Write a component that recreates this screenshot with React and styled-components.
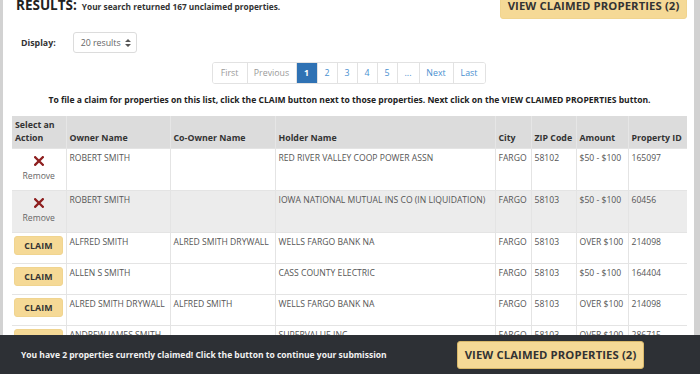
import React from 'react';
import styled, { createGlobalStyle } from 'styled-components';

const GlobalStyle = createGlobalStyle`
  html, body {
    margin: 0;
    padding: 0;
    background: #d2d2d2;
    font-family: "Open Sans", "Liberation Sans", sans-serif;
    overflow: hidden;
  }
`;

const Page = styled.div`
  margin: -9px 6px 0 3px;
  padding: 0 7px 60px 9px;
  background: #fff;
  min-height: 420px;
`;

const HeaderRow = styled.div`
  display: flex;
  align-items: center;
  justify-content: space-between;
`;

const Heading = styled.h2`
  margin: 0 0 0 4px;
  font-size: 13.5px;
  font-weight: 700;
  color: #222;
  display: flex;
  align-items: baseline;
  gap: 5px;
`;

const SubHeading = styled.span`
  font-size: 8.3px;
  font-weight: 700;
  color: #333;
`;

const GoldButton = styled.button`
  font-family: inherit;
  font-weight: 700;
  font-size: ${({ size }) => size || 11.3}px;
  color: #333;
  background: #f5d996;
  border: 1px solid ${({ bordered }) => (bordered ? '#d9b86a' : '#f0d48f')};
  border-radius: 3px;
  padding: 0;
  height: ${({ h }) => h || 28}px;
  width: ${({ w }) => w}px;
  cursor: pointer;
  letter-spacing: 0.1px;
`;

const DisplayRow = styled.div`
  display: flex;
  align-items: center;
  margin-top: 13px;
  padding-left: 9px;
  gap: 17px;
`;

const Label = styled.span`
  font-size: 8.8px;
  font-weight: 700;
  color: #333;
`;

const Select = styled.div`
  display: flex;
  align-items: center;
  gap: 4px;
  box-sizing: border-box;
  width: 64px;
  height: 21px;
  padding-left: 7px;
  border: 1px solid #dcdcdc;
  border-radius: 3px;
  font-size: 8.8px;
  color: #666;
`;

const PagerWrap = styled.div`
  display: flex;
  justify-content: center;
  margin-top: 9px;
  padding-right: 2px;
`;

const Pager = styled.div`
  display: flex;
  border: 1px solid #e2e2e2;
  border-radius: 3px;
  overflow: hidden;
`;

const PageItem = styled.span`
  box-sizing: border-box;
  height: 20px;
  width: ${({ w }) => w}px;
  display: flex;
  align-items: center;
  justify-content: center;
  font-size: 8.8px;
  border-left: ${({ first }) => (first ? 'none' : '1px solid #e2e2e2')};
  color: ${({ active, disabled }) => (active ? '#fff' : disabled ? '#9a9a9a' : '#4a8fd0')};
  background: ${({ active }) => (active ? '#2f72b4' : '#fff')};
  font-weight: ${({ active }) => (active ? 700 : 400)};
`;

const Instruction = styled.p`
  margin: 10px 0 0;
  text-align: center;
  font-size: 8.55px;
  font-weight: 700;
  color: #222;
  line-height: 13px;
`;

const Table = styled.table`
  margin-top: 9px;
  width: 675px;
  border-collapse: collapse;
  table-layout: fixed;
  font-size: 8.6px;
`;

const Th = styled.th`
  background: #dcdcdc;
  color: #333;
  font-weight: 700;
  text-align: left;
  vertical-align: bottom;
  padding: 3px 3px 3px;
  line-height: 13px;
  border-left: 1px solid #e6e6e6;
  font-size: 8.8px;
  &:first-child {
    border-left: none;
  }
`;

const Tr = styled.tr`
  background: ${({ shaded }) => (shaded ? '#ececec' : '#fff')};
  border-top: 1px solid #e4e4e4;
`;

const Td = styled.td`
  vertical-align: top;
  padding: 3px 3px 0;
  height: ${({ h }) => h}px;
  box-sizing: border-box;
  color: #555;
  line-height: 13px;
  border-left: 1px solid #e4e4e4;
  white-space: nowrap;
  overflow: hidden;
  &:first-child {
    border-left: none;
    padding-left: 2px;
    padding-right: 2px;
  }
`;

const RemoveCell = styled.div`
  display: flex;
  flex-direction: column;
  align-items: center;
  padding-top: 4px;
  gap: 4px;
  color: #666;
  font-size: 8.6px;
`;

const BottomBar = styled.div`
  position: fixed;
  left: 0;
  right: 0;
  bottom: 0;
  height: 39px;
  background: #2d3035;
  display: flex;
  align-items: center;
  justify-content: space-between;
  padding: 0 56px 0 21px;
`;

const BarText = styled.span`
  color: #f2f2f2;
  font-size: 8.5px;
  font-weight: 700;
`;

const SortIcon = () => (
  <svg width="6" height="8" viewBox="0 0 6 8">
    <path d="M3 0 L6 3 L0 3 Z M3 8 L6 5 L0 5 Z" fill="#555" />
  </svg>
);

const XIcon = () => (
  <svg width="10" height="10" viewBox="0 0 10 10">
    <path d="M1.2 1.2 L8.8 8.8 M8.8 1.2 L1.2 8.8" stroke="#8e1f1f" strokeWidth="2.3" strokeLinecap="square" />
  </svg>
);

const columns = [
  { label: 'Select an Action', w: 54 },
  { label: 'Owner Name', w: 104 },
  { label: 'Co-Owner Name', w: 105 },
  { label: 'Holder Name', w: 220 },
  { label: 'City', w: 36 },
  { label: 'ZIP Code', w: 45 },
  { label: 'Amount', w: 52 },
  { label: 'Property ID', w: 59 },
];

const rows = [
  { claimed: true, owner: 'ROBERT SMITH', co: '', holder: 'RED RIVER VALLEY COOP POWER ASSN', zip: '58102', amount: '$50 - $100', id: '165097' },
  { claimed: true, shaded: true, owner: 'ROBERT SMITH', co: '', holder: 'IOWA NATIONAL MUTUAL INS CO (IN LIQUIDATION)', zip: '58103', amount: '$50 - $100', id: '60456' },
  { owner: 'ALFRED SMITH', co: 'ALRED SMITH DRYWALL', holder: 'WELLS FARGO BANK NA', zip: '58103', amount: 'OVER $100', id: '214098' },
  { owner: 'ALLEN S SMITH', co: '', holder: 'CASS COUNTY ELECTRIC', zip: '58103', amount: '$50 - $100', id: '164404' },
  { owner: 'ALRED SMITH DRYWALL', co: 'ALFRED SMITH', holder: 'WELLS FARGO BANK NA', zip: '58103', amount: 'OVER $100', id: '214098' },
  { owner: 'ANDREW JAMES SMITH', co: '', holder: 'SUPERVALUE INC', zip: '58103', amount: 'OVER $100', id: '286715' },
  { owner: 'ANN SMITH', co: '', holder: 'WELLS FARGO BANK NA', zip: '58103', amount: '$50 - $100', id: '214101' },
];

const pages = [
  { t: 'First', w: 34, disabled: true },
  { t: 'Previous', w: 49, disabled: true },
  { t: '1', w: 21, active: true },
  { t: '2', w: 20 },
  { t: '3', w: 20 },
  { t: '4', w: 20 },
  { t: '5', w: 20 },
  { t: '...', w: 22 },
  { t: 'Next', w: 34 },
  { t: 'Last', w: 32 },
];

export default function App() {
  return (
    <>
      <GlobalStyle />
      <Page>
        <HeaderRow>
          <Heading>
            RESULTS:
            <SubHeading>Your search returned 167 unclaimed properties.</SubHeading>
          </Heading>
          <GoldButton w={187}>VIEW CLAIMED PROPERTIES (2)</GoldButton>
        </HeaderRow>

        <DisplayRow>
          <Label>Display:</Label>
          <Select>
            20 results <SortIcon />
          </Select>
        </DisplayRow>

        <PagerWrap>
          <Pager>
            {pages.map((p, i) => (
              <PageItem key={p.t} w={p.w} first={i === 0} active={p.active} disabled={p.disabled}>
                {p.t}
              </PageItem>
            ))}
          </Pager>
        </PagerWrap>

        <Instruction>
          To file a claim for properties on this list, click the CLAIM button next to those properties. Next click on the VIEW CLAIMED PROPERTIES button.
        </Instruction>

        <Table>
          <colgroup>
            {columns.map((c) => (
              <col key={c.label} style={{ width: c.w }} />
            ))}
          </colgroup>
          <thead>
            <tr>
              {columns.map((c) => (
                <Th key={c.label}>{c.label}</Th>
              ))}
            </tr>
          </thead>
          <tbody>
            {rows.map((r, i) => (
              <Tr key={i} shaded={r.shaded}>
                <Td h={r.claimed ? 42 : 31}>
                  {r.claimed ? (
                    <RemoveCell>
                      <XIcon />
                      Remove
                    </RemoveCell>
                  ) : (
                    <GoldButton w={49} h={19} size={8.8}>CLAIM</GoldButton>
                  )}
                </Td>
                <Td>{r.owner}</Td>
                <Td>{r.co}</Td>
                <Td>{r.holder}</Td>
                <Td>FARGO</Td>
                <Td>{r.zip}</Td>
                <Td>{r.amount}</Td>
                <Td>{r.id}</Td>
              </Tr>
            ))}
          </tbody>
        </Table>
      </Page>

      <BottomBar>
        <BarText>You have 2 properties currently claimed! Click the button to continue your submission</BarText>
        <GoldButton w={187} bordered>VIEW CLAIMED PROPERTIES (2)</GoldButton>
      </BottomBar>
    </>
  );
}
